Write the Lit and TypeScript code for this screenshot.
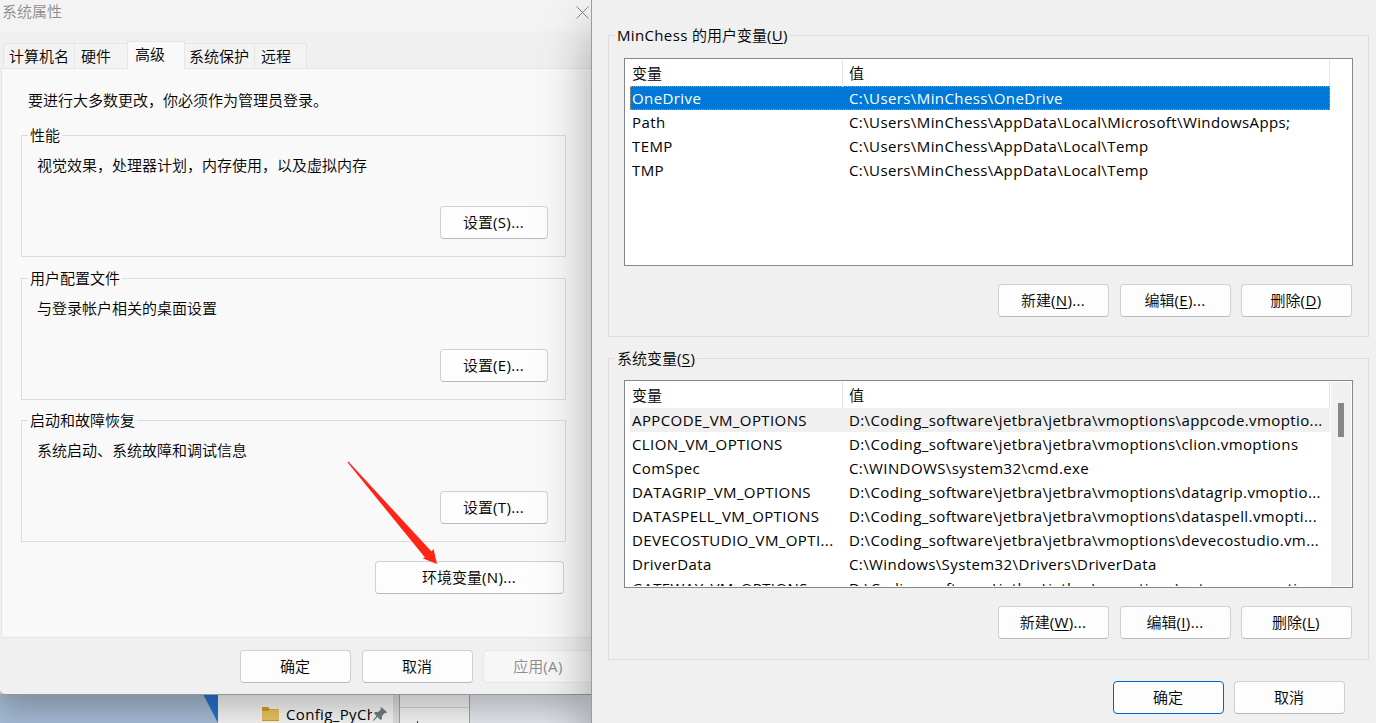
import { LitElement, html, css, nothing } from "lit";
import { customElement, property } from "lit/decorators.js";

const textStyles = css`
  :host, button {
    font-family: "Open Sans", "Noto Sans CJK SC", sans-serif;
    font-size: 15px;
    font-weight: 350;
    line-height: 20px;
    color: #000;
  }
  .lat { font-weight: 400; letter-spacing: 0.35px; line-height: 1; }
`;

@customElement("win-button")
class WinButton extends LitElement {
  @property() label = "";
  @property() key = "";
  @property() suffix = "";
  @property({ type: Boolean }) underlined = false;
  @property({ type: Boolean }) primary = false;
  @property({ type: Boolean }) disabled = false;

  static styles = [textStyles, css`
    :host { display: block; width: 111px; height: 33px; flex: none; }
    .btn {
      box-sizing: border-box; width: 100%; height: 100%; padding: 0 1px 1px 0;
      display: flex; align-items: center; justify-content: center; white-space: pre;
      border: 1px solid #d0d0d0; border-bottom-color: #b9b9b9; border-radius: 4px;
      background: #fdfdfd;
    }
    .caption { display: block; height: 20px; }
    .primary { border-color: #0067c0; }
    .disabled { background: #f7f7f7; border-color: #e6e6e6; color: #8c8c8c; }
    u { text-underline-offset: 2px; text-decoration-thickness: 1px; }
  `];

  render() {
    const cls = "btn" + (this.primary ? " primary" : "") + (this.disabled ? " disabled" : "");
    return html`<button class=${cls}><span class="caption">${this.label}${this.key
      ? html`<span class="lat">(${this.underlined ? html`<u>${this.key}</u>` : this.key})${this.suffix}</span>`
      : nothing}</span></button>`;
  }
}

type Row = [string, string];

@customElement("variable-list")
class VariableList extends LitElement {
  @property({ attribute: false }) rows: Row[] = [];
  @property() mode = "";

  static styles = [textStyles, css`
    :host {
      display: flex; box-sizing: border-box; width: 729px; height: 208px;
      border: 1px solid #828790; background: #fff; padding: 1px 1px 1px 5px; overflow: hidden;
    }
    .table { width: 700px; height: 204px; overflow: hidden; flex: none; }
    .row { display: grid; grid-template-columns: 213px 487px; height: 24px; align-items: center; white-space: pre; }
    .row > span { padding-left: 2px; }
    .row > span + span { padding-left: 6px; }
    .row.head { height: 26px; align-items: stretch; }
    .head > span { border-right: 1px solid #e5e5e5; line-height: 27px; }
    .body { font-weight: 400; letter-spacing: 0.4px; }
    .selected { background: #0078d7; color: #fff; outline: 1px dotted #ff8728; outline-offset: -1px; }
    .inactive { background: #f0f0f0; }
    .track { margin-left: 1px; width: 20px; background: #f0f0f0; display: flex; justify-content: center; padding-top: 21px; box-sizing: border-box; }
    .thumb { width: 6px; height: 34px; background: #868686; }
  `];

  render() {
    return html`
      <div class="table">
        <div class="row head"><span>变量</span><span>值</span></div>
        <div class="body">
          ${this.rows.map(([name, value], i) => html`
            <div class="row ${i === 0 ? this.mode : ""}"><span>${name}</span><span>${value}</span></div>`)}
        </div>
      </div>
      ${this.mode === "inactive" ? html`<div class="track"><div class="thumb"></div></div>` : nothing}`;
  }
}

const userVars: Row[] = [
  ["OneDrive", "C:\\Users\\MinChess\\OneDrive"],
  ["Path", "C:\\Users\\MinChess\\AppData\\Local\\Microsoft\\WindowsApps;"],
  ["TEMP", "C:\\Users\\MinChess\\AppData\\Local\\Temp"],
  ["TMP", "C:\\Users\\MinChess\\AppData\\Local\\Temp"],
];
const vm = "D:\\Coding_software\\jetbra\\jetbra\\vmoptions\\";
const systemVars: Row[] = [
  ["APPCODE_VM_OPTIONS", vm + "appcode.vmoptio..."],
  ["CLION_VM_OPTIONS", vm + "clion.vmoptions"],
  ["ComSpec", "C:\\WINDOWS\\system32\\cmd.exe"],
  ["DATAGRIP_VM_OPTIONS", vm + "datagrip.vmoptio..."],
  ["DATASPELL_VM_OPTIONS", vm + "dataspell.vmopti..."],
  ["DEVECOSTUDIO_VM_OPTI...", vm + "devecostudio.vm..."],
  ["DriverData", "C:\\Windows\\System32\\Drivers\\DriverData"],
  ["GATEWAY_VM_OPTIONS", vm + "gateway.vmoptio..."],
];

@customElement("app-root")
class AppRoot extends LitElement {
  static styles = [textStyles, css`
    :host { display: block; position: relative; width: 1376px; height: 723px; overflow: hidden; background: #e3e7ec; }
    .desktop { box-sizing: border-box; height: 723px; padding-top: 694px; display: flex; }
    .wallpaper { width: 218px; height: 29px; background: linear-gradient(#a3b9cd, #a3bad4); }
    .wallpaper svg { display: block; margin-left: 203px; }
    .explorer { box-sizing: border-box; width: 182px; height: 29px; background: linear-gradient(90deg, #f3f3f3 175px, #dcdcdc 175px); border-right: 1px solid #a2a2a2; display: flex; padding: 10px 0 0 43px; overflow: hidden; }
    .explorer svg { flex: none; }
    .folder { margin-top: 2px; }
    .name { padding-left: 6px; overflow: hidden; white-space: pre; flex: none; width: 86px; font-weight: 400; letter-spacing: 0.35px; }
    .pin { margin: 3px 0 0 1px; }
    .pane { box-sizing: border-box; width: 70px; height: 29px; background: #f3f3f3; border-right: 1px solid #a2a2a2; }
    .pane-line { height: 13px; border-bottom: 1px solid #d5d5d5; }
    .pane-mark { width: 1px; height: 2px; margin: 13px 0 0 17px; background: #333; }

    .win { position: absolute; box-sizing: border-box; }
    .props { left: 0; top: 0; width: 592px; height: 695px; background: #f0f0f0; border-bottom: 1px solid #959595; border-bottom-left-radius: 5px; box-shadow: 0 14px 30px rgba(0,0,0,.24); }
    .titlebar { box-sizing: border-box; height: 31px; background: #f3f3f3; display: flex; justify-content: space-between; padding: 1px 3px 0 2px; color: #8c8c8c; }
    .titlebar svg { margin-top: 5px; }
    .tabs { height: 37px; display: flex; align-items: flex-end; padding-left: 3px; }
    .tab { box-sizing: border-box; height: 25px; border: 1px solid #e5e5e5; border-bottom: 0; border-left-width: 0; background: #f3f3f3; padding: 2px 0 0 6px; white-space: nowrap; }
    .t0 { width: 72px; border-left-width: 1px; padding-left: 5px; }
    .t1 { width: 52px; border-right: 0; }
    .t2 { width: 58px; height: 28px; margin-bottom: -1px; border-left-width: 1px; background: #f9f9f9; padding: 2px 0 0 7px; z-index: 1; }
    .t3 { width: 70px; padding-left: 4px; }
    .t4 { width: 52px; }
    .page { box-sizing: border-box; margin-left: 1px; height: 570px; border: 1px solid #e5e5e5; border-right: 0; background: #f9f9f9; padding: 21px 0 0 19px; }
    .intro { padding-left: 7px; }
    .group { box-sizing: border-box; border: 1px solid #dcdcdc; }
    .legend { display: block; width: max-content; white-space: pre; height: 20px; }
    .page .group { width: 545px; height: 122px; padding: 0 17px 17px 6px; margin-top: 21px; display: flex; flex-direction: column; }
    .page .group.first { margin-top: 25px; }
    .page .group.last { margin-top: 20px; }
    .page .legend { margin-top: -11px; background: #f9f9f9; padding: 0 2px; }
    .desc { padding-left: 9px; margin-top: 10px; }
    .page .group win-button { width: 108px; margin: auto 0 0 auto; }
    .env { width: 189px; margin: 19px 0 0 354px; }
    .foot { display: flex; padding: 12px 0 0 240px; gap: 11px; }
    .foot win-button:last-child { margin-left: -1px; }

    .vars { left: 591px; top: -8px; width: 800px; height: 780px; border-left: 1px solid #9b9b9b; background: #f0f0f0; padding: 43px 0 0 16px; box-shadow: 0 40px 48px rgba(0,0,0,.34); }
    .vars .group { width: 761px; height: 302px; padding: 0 15px 0 15px; }
    .vars .group + .group { margin-top: 21px; }
    .vars .legend { margin-left: -9px; margin-top: -11px; padding: 0 2px; background: #f0f0f0; }
    .vars variable-list { margin-top: 13px; }
    .vars .group + .group variable-list { margin-top: 12px; }
    .actions { display: flex; justify-content: flex-end; gap: 11px; padding-right: 1px; margin-top: 18px; }
    .actions win-button:last-child { margin-left: -1px; }
    .confirm { display: flex; gap: 10px; padding-left: 505px; margin-top: 21px; }
    u { text-underline-offset: 2px; text-decoration-thickness: 1px; }
    .arrow { position: absolute; left: 340px; top: 455px; }
  `];

  private group(title: string, text: string, key: string, cls = "") {
    return html`<section class="group ${cls}">
      <span class="legend">${title}</span>
      <span class="desc">${text}</span>
      <win-button label="设置" key=${key} suffix="..."></win-button>
    </section>`;
  }

  render() {
    return html`
      <div class="desktop">
        <div class="wallpaper"><svg width="15" height="29"><path d="M0 0H15V29Z" fill="#2670c8"/></svg></div>
        <div class="explorer">
          <svg class="folder" width="19" height="16" viewBox="0 0 19 16"><path d="M1 1H7L9 3H18V15H1Z" fill="#d19d18"/><path d="M1 5H7L9 3.5H18V14H1Z" fill="#e6c161"/></svg>
          <span class="name">Config_PyCharm</span>
          <svg class="pin" width="14" height="14" viewBox="0 0 14 14"><path d="M8 0L14 5L12.5 6.5L11.5 6L9 9L9 12L7.5 13L4.5 10L1 13.5L0 14L.5 12.5L3.5 9L1 6L2 5H5L8 2.5L7.5 1Z" fill="#727b82"/></svg>
        </div>
        <div class="pane"><div class="pane-line"></div><div class="pane-mark"></div></div>
      </div>

      <main class="win props">
        <header class="titlebar"><span>系统属性</span>
          <svg width="13" height="13" viewBox="0 0 13 13"><path d="M.5 .5L12.5 12.5M12.5 .5L.5 12.5" stroke="#858585" fill="none"/></svg>
        </header>
        <nav class="tabs">
          ${["计算机名", "硬件", "高级", "系统保护", "远程"].map((t, i) => html`<span class="tab t${i}">${t}</span>`)}
        </nav>
        <div class="page">
          <div class="intro">要进行大多数更改，你必须作为管理员登录。</div>
          ${this.group("性能", "视觉效果，处理器计划，内存使用，以及虚拟内存", "S", "first")}
          ${this.group("用户配置文件", "与登录帐户相关的桌面设置", "E")}
          ${this.group("启动和故障恢复", "系统启动、系统故障和调试信息", "T", "last")}
          <win-button class="env" label="环境变量" key="N" suffix="..."></win-button>
        </div>
        <footer class="foot">
          <win-button label="确定"></win-button>
          <win-button label="取消"></win-button>
          <win-button label="应用" key="A" disabled></win-button>
        </footer>
      </main>

      <section class="win vars">
        <div class="group">
          <span class="legend"><span class="lat">MinChess </span>的用户变量<span class="lat">(<u>U</u>)</span></span>
          <variable-list .rows=${userVars} mode="selected"></variable-list>
          <div class="actions">
            <win-button label="新建" key="N" suffix="..." underlined></win-button>
            <win-button label="编辑" key="E" suffix="..." underlined></win-button>
            <win-button label="删除" key="D" underlined></win-button>
          </div>
        </div>
        <div class="group">
          <span class="legend">系统变量<span class="lat">(<u>S</u>)</span></span>
          <variable-list .rows=${systemVars} mode="inactive"></variable-list>
          <div class="actions">
            <win-button label="新建" key="W" suffix="..." underlined></win-button>
            <win-button label="编辑" key="I" suffix="..." underlined></win-button>
            <win-button label="删除" key="L" underlined></win-button>
          </div>
        </div>
        <div class="confirm">
          <win-button label="确定" primary></win-button>
          <win-button label="取消"></win-button>
        </div>
      </section>

      <svg class="arrow" width="110" height="115" viewBox="340 455 110 115">
        <path d="M348.3 461.6L347.6 462.5L425 557.5L422.5 558.3L437 564L433.5 549L431.5 551.5Z" fill="#ff2416"/>
      </svg>`;
  }
}
